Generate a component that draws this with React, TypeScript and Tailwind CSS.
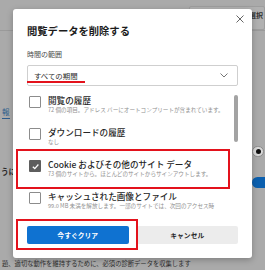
import React from "react";

const font = { fontFamily: '"Noto Sans CJK JP", "Noto Sans", sans-serif' };

function Item({
  label,
  sub,
  checked,
}: {
  label: string;
  sub: string;
  checked?: boolean;
}) {
  return (
    <div className="h-[32px] pt-[8px] pl-[2px] flex gap-[7px]">
      <div
        className={
          checked
            ? "w-[12px] h-[12px] shrink-0 rounded-[1px] bg-[#5e5e5e] flex items-center justify-center"
            : "w-[12px] h-[12px] shrink-0 rounded-[1px] border border-[#8c8c8c] bg-white"
        }
      >
        {checked && (
          <svg width="9" height="9" viewBox="0 0 10 10">
            <path d="M2 5.2 L4.2 7.3 L8.2 2.8" fill="none" stroke="#fff" strokeWidth="1.4" />
          </svg>
        )}
      </div>
      <div className="w-[186px] flex flex-col">
        <div className="h-[11px] leading-[11px] -mt-[1px] text-[8.6px] font-medium text-[#262626] whitespace-nowrap">
          {label}
        </div>
        <div className="leading-[8px] text-[5.6px] text-[#909090] whitespace-nowrap">{sub}</div>
      </div>
    </div>
  );
}

export default function App() {
  return (
    <div className="relative w-[265px] h-[270px] overflow-hidden bg-[#aaaaaa]" style={font}>
      {/* background page fragments (behind the modal overlay) */}
      <div className="absolute left-0 top-0 w-full h-[31px] border-b border-[#9a9a9a] flex justify-end pt-[6px]">
        <div className="w-[76px] h-[24px] bg-[#b1b1b1] border border-[#9e9e9e] rounded-[2px] flex justify-end pr-[1px] pt-[2px] text-[7px] leading-[12px] font-bold text-[#333]">
          選択
        </div>
      </div>
      <div className="absolute left-[2px] top-[106px] text-[7.5px] leading-[12px] text-[#2d5c8c] border-b border-[#2d5c8c]">報</div>
      <div className="absolute left-[1px] top-[166px] text-[7.5px] leading-[12px] font-bold text-[#2b2b2b]">うに</div>
      <div className="absolute left-[252px] top-[146px] w-[12px] h-[11px] rounded-full bg-[#d8d8d8] border border-[#8a8a8a] flex items-center justify-center">
        <div className="w-[5px] h-[5px] rounded-full bg-[#111]" />
      </div>
      <div className="absolute left-[252px] top-[177px] w-[24px] h-[11px] rounded-full bg-[#0b5fae]" />
      <div className="absolute left-[2px] top-[259px] text-[6.3px] leading-[10px] text-[#2e2e2e] whitespace-nowrap">
        題、適切な動作を維持するために、必須の診断データを収集します
      </div>

      {/* dialog */}
      <div className="absolute left-[13px] top-[9px] w-[239px] h-[249px] bg-white rounded-[3px] shadow-[0_2px_6px_rgba(0,0,0,0.25)] flex flex-col px-[14px] pt-[15px]">
        <svg className="absolute left-[223px] top-[6px]" width="8" height="8" viewBox="0 0 8 8">
          <path d="M0.5 0.5 L7.5 7.5 M7.5 0.5 L0.5 7.5" stroke="#555" strokeWidth="0.9" />
        </svg>
        <div className="h-[14px] leading-[14px] text-[10.3px] font-semibold text-[#1b1b1b] whitespace-nowrap">
          閲覧データを削除する
        </div>
        <div className="mt-[11px] h-[10px] leading-[10px] text-[7px] text-[#4a4a4a]">時間の範囲</div>
        <div className="relative mt-[6px] h-[21px] border border-[#cfcfcf] rounded-[2px] flex items-center justify-between pl-[6px] pr-[9px]">
          <span className="text-[7.4px] text-[#2a2a2a]">すべての期間</span>
          <svg width="8" height="5" viewBox="0 0 8 5">
            <path d="M0.5 0.5 L4 4 L7.5 0.5" fill="none" stroke="#666" strokeWidth="0.9" />
          </svg>
          <div className="absolute -left-px bottom-[2px] w-[58px] h-[2px] bg-[#e3121c]" />
        </div>
        <div className="relative mt-[2px] h-[126px] overflow-hidden">
          <Item label="閲覧の履歴" sub="72 個の項目。アドレス バーにオートコンプリートが含まれています。" />
          <Item label="ダウンロードの履歴" sub="なし" />
          <Item label="Cookie およびその他のサイト データ" sub="73 個のサイトから。ほとんどのサイトからサインアウトします。" checked />
          <Item label="キャッシュされた画像とファイル" sub="99.0 MB 未満を解放します。一部のサイトでは、次回のアクセス時" />
          <div className="absolute right-0 top-[7px] w-[4px] h-[47px] rounded-full bg-[#a3a3a3]" />
        </div>
        <div className="mt-[12px] h-[18px] flex gap-[8px]">
          <div className="flex-1 rounded-[2px] bg-[#0f72d1] flex items-center justify-center text-[6.8px] font-bold text-white">
            今すぐクリア
          </div>
          <div className="flex-1 rounded-[2px] bg-[#ececec] flex items-center justify-center text-[6.8px] font-bold text-[#2a2a2a]">
            キャンセル
          </div>
        </div>
      </div>

      {/* annotations */}
      <div className="absolute left-[16px] top-[149px] w-[214px] h-[40px] border-2 border-[#e3121c]" />
      <div className="absolute left-[16px] top-[219px] w-[122px] h-[31px] border-2 border-[#e3121c]" />
    </div>
  );
}
